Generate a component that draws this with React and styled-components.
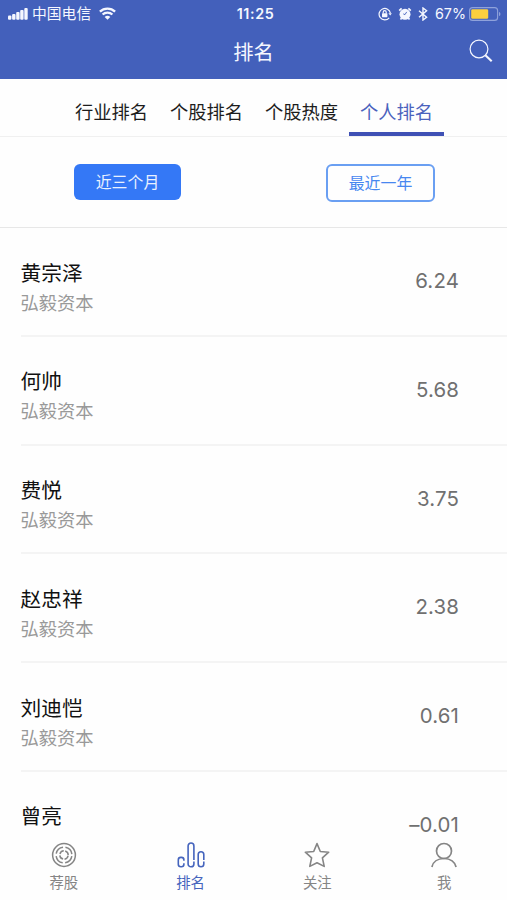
import React, {useState} from 'react';
import styled, {createGlobalStyle, css} from 'styled-components';

const GlobalStyle = createGlobalStyle`
  * {
    box-sizing: border-box;
  }
  body {
    margin: 0;
    background: #fefefe;
    font-family: Inter, "Noto Sans CJK SC", sans-serif;
  }
  button {
    margin: 0;
    padding: 0;
    border: 0;
    background: none;
    font: inherit;
  }
`;

const Screen = styled.div`
  display: flex;
  flex-direction: column;
  width: 507px;
  height: 900px;
  overflow: hidden;
`;

const Header = styled.header`
  flex: none;
  height: 79px;
  background: #4360bb;
  color: #f5f7ff;
`;

const StatusBar = styled.div`
  display: grid;
  grid-template-columns: 1fr auto 1fr;
  align-items: center;
  height: 27px;
  padding: 0 6px 0 8px;
  font-size: 14.6px;
  line-height: 20px;
`;

const StatusGroup = styled.div`
  display: flex;
  align-items: center;
  justify-content: ${props => (props.$end ? 'flex-end' : 'flex-start')};
`;

const Carrier = styled.span`
  margin: 0 8px 0 4px;
  padding-top: 1px;
  font-size: 14.8px;
`;

const Clock = styled.span`
  padding-left: 2px;
  font-size: 14.3px;
  font-weight: 600;
  letter-spacing: 0.6px;
`;

const StatusIcons = styled.div`
  display: flex;
  align-items: center;
  gap: 6px;
`;

const Percent = styled.span`
  margin: 0 3px 0 7px;
  font-size: 14.3px;
`;

const TitleBar = styled.div`
  display: grid;
  grid-template-columns: 1fr auto 1fr;
  align-items: center;
  height: 50px;
  padding-right: 14px;
  padding-left: 14px;
`;

const Title = styled.h1`
  grid-column: 2;
  margin: 0;
  padding-top: 2px;
  font-size: 20.3px;
  font-weight: 400;
  line-height: 30px;
`;

const SearchButton = styled.button`
  display: flex;
  justify-self: end;
  margin-top: -2px;
  color: inherit;
`;

const Tabs = styled.nav`
  display: flex;
  flex: none;
  height: 58px;
  padding-left: 64px;
  border-bottom: 1px solid #f0f0f0;
`;

const Tab = styled.button`
  width: 95px;
  height: 57px;
  padding-top: 12px;
  border-bottom: 4px solid transparent;
  color: #1c1c1c;
  font-size: 18.3px;
  line-height: 28px;
  ${props =>
    props.$active &&
    css`
      border-color: #3f51b5;
      color: #4a62bd;
    `}
`;

const Filters = styled.div`
  display: flex;
  flex: none;
  align-items: flex-start;
  justify-content: space-between;
  height: 91px;
  padding: 26.5px 72px 0 74px;
  border-bottom: 1px solid #e7e7e7;
`;

const Filter = styled.button`
  width: 109px;
  height: 38.5px;
  padding-top: 2px;
  border: 2px solid #6a9ff2;
  border-radius: 6px;
  color: #4787f0;
  font-size: 15.9px;
  line-height: 24px;
  ${props =>
    props.$active &&
    css`
      width: 107px;
      height: 36px;
      border: 0;
      background: #3478f6;
      color: #e9f1ff;
    `}
`;

const List = styled.ul`
  flex: 1;
  min-height: 0;
  margin: 0;
  padding: 0 0 0 20.5px;
  overflow: hidden;
  list-style: none;
`;

const Row = styled.li`
  display: flex;
  justify-content: space-between;
  height: 108.75px;
  padding-right: 48px;
  border-bottom: 2px solid #f4f4f4;
`;

const Person = styled.div`
  padding-top: 30.5px;
`;

const Name = styled.div`
  color: #111;
  font-size: 20.7px;
  line-height: 30px;
`;

const Company = styled.div`
  color: #999;
  font-size: 18.3px;
  line-height: 29.5px;
`;

const Score = styled.div`
  padding-top: 38px;
  color: #707070;
  font-size: 20.4px;
  letter-spacing: 0.15px;
  line-height: 30px;
`;

const TabBar = styled.nav`
  display: grid;
  flex: none;
  grid-template-columns: repeat(4, 1fr);
  height: 64px;
`;

const TabBarItem = styled.button`
  display: flex;
  flex-direction: column;
  align-items: center;
  padding: 6px 0 0 1px;
  color: ${props => (props.$active ? '#4564bd' : '#858585')};
  font-size: 14.4px;
  line-height: 20px;
  svg {
    display: block;
    margin-bottom: 5px;
  }
`;

const SignalIcon = () => (
  <svg width="20" height="14" viewBox="0 0 20 14" fill="currentColor">
    <rect x="0" y="8.6" width="3.4" height="4.2" rx="1" />
    <rect x="4.1" y="7" width="3.4" height="5.8" rx="1" />
    <rect x="8.2" y="5" width="3.4" height="7.8" rx="1" />
    <rect x="12.2" y="3" width="3.4" height="9.8" rx="1" />
    <rect x="16.3" y="1" width="3.4" height="11.8" rx="1" />
  </svg>
);

const WifiIcon = () => (
  <svg width="17" height="13" viewBox="0 0 17 13" fill="none" stroke="currentColor" strokeWidth="2.3">
    <path d="M.9 4.6c4.2-4.1 11-4.1 15.2 0M3.6 7.5c2.7-2.6 7.1-2.6 9.8 0" />
    <path d="M8.5 12.7 5.7 9.9c1.5-1.5 4.1-1.5 5.6 0Z" fill="currentColor" stroke="none" />
  </svg>
);

const RotationLockIcon = () => (
  <svg width="14" height="14" viewBox="0 0 14 14" fill="none" stroke="currentColor" strokeWidth="1.2">
    <path d="M11.2 10.8A5.7 5.7 0 1 1 12.4 6.2" />
    <path d="M10.4 6.2h3.5l-1.7 2.4Z" fill="currentColor" stroke="none" />
    <rect x="4" y="6.2" width="5.4" height="4" rx=".6" fill="currentColor" stroke="none" />
    <path d="M5.2 6.4V5.2a1.5 1.5 0 0 1 3 0v1.2" />
  </svg>
);

const AlarmIcon = () => (
  <svg width="14" height="14" viewBox="0 0 14 14" fill="none" stroke="currentColor">
    <circle cx="7" cy="7.3" r="5.5" fill="currentColor" stroke="none" />
    <path d="M1.2 3.6 3.6 1.4M12.8 3.6l-2.4-2.2M3.6 11l-1.1 1.5M10.4 11l1.1 1.5" strokeWidth="1.7" />
    <path d="M8.7 4.9 7 7.6 5.3 6.9" stroke="#4360bb" strokeWidth=".9" />
  </svg>
);

const BluetoothIcon = () => (
  <svg width="10" height="14" viewBox="0 0 10 14" fill="none" stroke="currentColor" strokeWidth="1.4">
    <path d="m1 3.7 7.6 6.5L5 13V1l3.6 2.8L1 10.3" />
  </svg>
);

const BatteryIcon = () => (
  <svg width="32" height="14" viewBox="0 0 32 14">
    <rect x=".6" y=".6" width="28" height="12.8" rx="3" fill="none" stroke="#8fa2db" strokeWidth="1.1" />
    <rect x="2.2" y="2.2" width="17" height="9.6" rx="1.3" fill="#fccf3e" />
    <path d="M30 4.9c1.9.6 1.9 3.6 0 4.2Z" fill="#8fa2db" />
  </svg>
);

const SearchIcon = () => (
  <svg width="24" height="24" viewBox="0 0 24 24" fill="none" stroke="currentColor">
    <circle cx="10" cy="10" r="8.9" strokeWidth="1.2" />
    <path d="m16.4 16.2 6.3 6.1" strokeWidth="2.1" />
  </svg>
);

const TargetIcon = () => (
  <svg width="26" height="26" viewBox="0 0 26 26" fill="none" stroke="currentColor" strokeWidth="1.5">
    <circle cx="13" cy="13" r="11.4" />
    <circle cx="13" cy="13" r="7.9" strokeDasharray="9.91 2.5" strokeDashoffset="-1.25" />
    <circle cx="13" cy="13" r="4.2" strokeDasharray="5.1 1.5" strokeDashoffset="-.75" />
  </svg>
);

const RankIcon = () => (
  <svg width="28" height="26" viewBox="0 0 28 26" fill="none" stroke="currentColor" strokeWidth="1.6">
    <path d="M6.9 18.8v-.9a2.5 2.5 0 0 0-2.5-2.5h-.6a2.5 2.5 0 0 0-2.5 2.5v4.3a2.5 2.5 0 0 0 2.5 2.5h.6a2.5 2.5 0 0 0 2.5-2.5v-.9" />
    <path d="M16.9 17.9v-14a2.9 2.9 0 0 0-5.8 0v18a2.9 2.9 0 0 0 5.8 0v-2.4" />
    <path d="M26.8 17.9v-5.4a2.8 2.8 0 0 0-5.6 0v9.4a2.8 2.8 0 0 0 5.6 0v-2.4" />
  </svg>
);

const StarIcon = () => (
  <svg width="26" height="26" viewBox="0 0 26 26" fill="none" stroke="currentColor" strokeWidth="1.6" strokeLinejoin="round">
    <path d="m13 1.6 3.3 7.9 8.4.7-6.3 5.7 1.8 8.5-7.2-3.6-7.2 3.6 1.8-8.5-6.3-5.7 8.4-.7Z" />
  </svg>
);

const UserIcon = () => (
  <svg width="26" height="26" viewBox="0 0 26 26" fill="none" stroke="currentColor" strokeWidth="1.7">
    <circle cx="13" cy="9" r="7.5" />
    <path d="M.9 25C1.9 20 6.5 16.6 13 16.5S24.1 20 25.1 25" />
  </svg>
);

const tabs = ['行业排名', '个股排名', '个股热度', '个人排名'];
const periods = ['近三个月', '最近一年'];

const people = [
  {name: '黄宗泽', company: '弘毅资本', score: '6.24'},
  {name: '何帅', company: '弘毅资本', score: '5.68'},
  {name: '费悦', company: '弘毅资本', score: '3.75'},
  {name: '赵忠祥', company: '弘毅资本', score: '2.38'},
  {name: '刘迪恺', company: '弘毅资本', score: '0.61'},
  {name: '曾亮', company: '', score: '–0.01'},
];

const sections = [
  {label: '荐股', Icon: TargetIcon},
  {label: '排名', Icon: RankIcon},
  {label: '关注', Icon: StarIcon},
  {label: '我', Icon: UserIcon},
];

const App = () => {
  const [tab, setTab] = useState('个人排名');
  const [period, setPeriod] = useState('近三个月');
  const [section, setSection] = useState('排名');

  return (
    <Screen>
      <GlobalStyle />
      <Header>
        <StatusBar>
          <StatusGroup>
            <SignalIcon />
            <Carrier>中国电信</Carrier>
            <WifiIcon />
          </StatusGroup>
          <Clock>11:25</Clock>
          <StatusGroup $end>
            <StatusIcons>
              <RotationLockIcon />
              <AlarmIcon />
              <BluetoothIcon />
            </StatusIcons>
            <Percent>67%</Percent>
            <BatteryIcon />
          </StatusGroup>
        </StatusBar>
        <TitleBar>
          <Title>排名</Title>
          <SearchButton aria-label="搜索">
            <SearchIcon />
          </SearchButton>
        </TitleBar>
      </Header>
      <Tabs>
        {tabs.map(label => (
          <Tab key={label} $active={label === tab} onClick={() => setTab(label)}>
            {label}
          </Tab>
        ))}
      </Tabs>
      <Filters>
        {periods.map(label => (
          <Filter key={label} $active={label === period} onClick={() => setPeriod(label)}>
            {label}
          </Filter>
        ))}
      </Filters>
      <List>
        {people.map(person => (
          <Row key={person.name}>
            <Person>
              <Name>{person.name}</Name>
              <Company>{person.company}</Company>
            </Person>
            <Score>{person.score}</Score>
          </Row>
        ))}
      </List>
      <TabBar>
        {sections.map(({label, Icon}) => (
          <TabBarItem key={label} $active={label === section} onClick={() => setSection(label)}>
            <Icon />
            {label}
          </TabBarItem>
        ))}
      </TabBar>
    </Screen>
  );
};

export default App;
